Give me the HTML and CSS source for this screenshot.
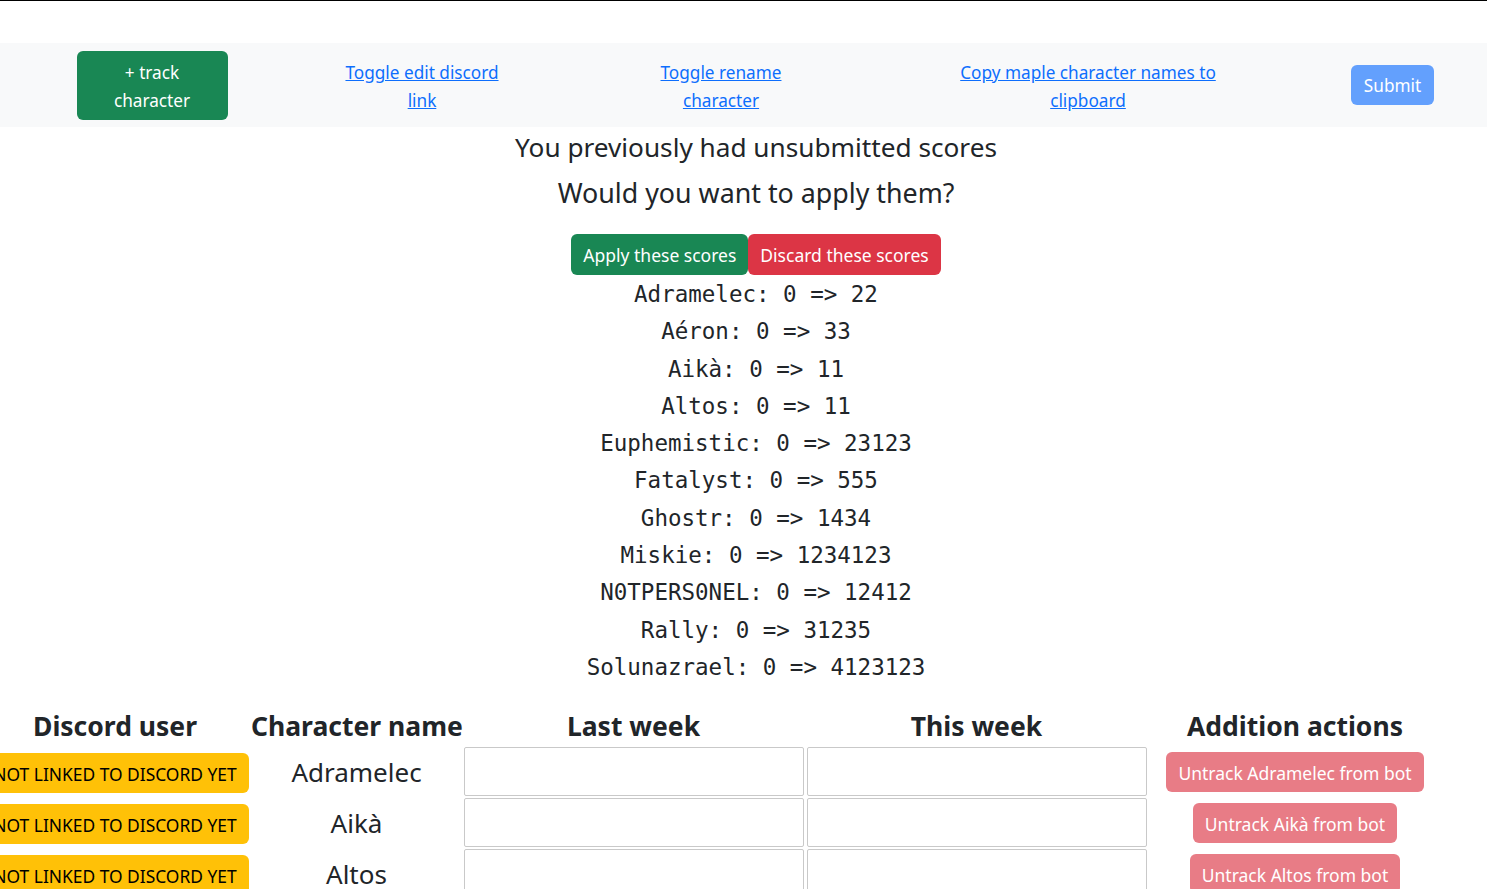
FILE: index.html
```html
<!DOCTYPE html>
<html lang="en">
<head>
<meta charset="utf-8">
<title>Scores</title>
<link rel="stylesheet" href="styles.css">
</head>
<body>
<div class="topline"></div>
<nav class="navbar">
  <div class="nav-cell c1"><button class="btn btn-success btn-track">+ track<br>character</button></div>
  <div class="nav-cell c2"><a href="#" class="nav-link">Toggle edit discord<br>link</a></div>
  <div class="nav-cell c3"><a href="#" class="nav-link">Toggle rename<br>character</a></div>
  <div class="nav-cell c4"><a href="#" class="nav-link">Copy maple character names to<br>clipboard</a></div>
  <div class="nav-cell c5"><button class="btn btn-primary-disabled">Submit</button></div>
</nav>
<main class="main">
  <section class="restore">
    <h3 class="restore-title">You previously had unsubmitted scores</h3>
    <h3 class="restore-title second">Would you want to apply them?</h3>
    <div class="btn-group">
      <button class="btn btn-success">Apply these scores</button>
      <button class="btn btn-danger">Discard these scores</button>
    </div>
    <div class="diff-list">
      <div class="diff">Adramelec: 0 =&gt; 22</div>
      <div class="diff">Aéron: 0 =&gt; 33</div>
      <div class="diff">Aikà: 0 =&gt; 11</div>
      <div class="diff">Altos: 0 =&gt; 11</div>
      <div class="diff">Euphemistic: 0 =&gt; 23123</div>
      <div class="diff">Fatalyst: 0 =&gt; 555</div>
      <div class="diff">Ghostr: 0 =&gt; 1434</div>
      <div class="diff">Miskie: 0 =&gt; 1234123</div>
      <div class="diff">N0TPERS0NEL: 0 =&gt; 12412</div>
      <div class="diff">Rally: 0 =&gt; 31235</div>
      <div class="diff">Solunazrael: 0 =&gt; 4123123</div>
    </div>
  </section>
  <div class="table-wrap">
    <table class="score-table">
      <colgroup>
        <col class="col-discord">
        <col class="col-name">
        <col class="col-week">
        <col class="col-week">
        <col class="col-actions">
      </colgroup>
      <thead>
        <tr>
          <th>Discord user</th>
          <th>Character name</th>
          <th>Last week</th>
          <th>This week</th>
          <th>Addition actions</th>
        </tr>
      </thead>
      <tbody>
        <tr>
          <td><span class="badge-warn">NOT LINKED TO DISCORD YET</span></td>
          <td class="char-name">Adramelec</td>
          <td><input class="score-input" type="text"></td>
          <td><input class="score-input" type="text"></td>
          <td><button class="btn btn-danger-disabled">Untrack Adramelec from bot</button></td>
        </tr>
        <tr>
          <td><span class="badge-warn">NOT LINKED TO DISCORD YET</span></td>
          <td class="char-name">Aikà</td>
          <td><input class="score-input" type="text"></td>
          <td><input class="score-input" type="text"></td>
          <td><button class="btn btn-danger-disabled">Untrack Aikà from bot</button></td>
        </tr>
        <tr>
          <td><span class="badge-warn">NOT LINKED TO DISCORD YET</span></td>
          <td class="char-name">Altos</td>
          <td><input class="score-input" type="text"></td>
          <td><input class="score-input" type="text"></td>
          <td><button class="btn btn-danger-disabled">Untrack Altos from bot</button></td>
        </tr>
      </tbody>
    </table>
  </div>
</main>
</body>
</html>
```

FILE: styles.css
```css
* { box-sizing: border-box; }
html, body {
  margin: 0;
  padding: 0;
  overflow: hidden;
}
body {
  font-family: "Noto Sans", "Open Sans", sans-serif;
  color: #212529;
  background: #fff;
}
.topline {
  height: 1px;
  background: #000;
}
.navbar {
  margin-top: 42px;
  height: 84px;
  background: #f8f9fa;
  display: grid;
  grid-template-columns: 304px 236px 362px 372px 1fr;
  align-items: center;
}
.nav-cell {
  display: flex;
  justify-content: center;
  text-align: center;
}
.nav-cell.c2,
.nav-cell.c3,
.nav-cell.c4 {
  padding-top: 4px;
}
.nav-cell.c5 {
  justify-content: flex-start;
  padding-left: 77px;
}
.nav-link {
  color: #0d6efd;
  font-size: 17.2px;
  line-height: 28px;
  text-decoration: underline;
}
.btn {
  font-family: inherit;
  font-size: 17.5px;
  border: 0;
  border-radius: 6px;
  color: #fff;
  height: 40px;
  padding: 0 12px;
  cursor: pointer;
  white-space: nowrap;
}
.btn-success { background: #198754; }
.btn-danger { background: #dc3545; }
.btn-track {
  width: 151px;
  height: 69px;
  line-height: 28px;
  padding-top: 4px;
  font-size: 17.2px;
}
.btn-primary-disabled {
  background: #63a0fd;
  width: 83px;
  font-size: 17.2px;
}
.btn-danger-disabled {
  background: #e87c86;
  padding-top: 3px;
}
.main {
  display: flex;
  flex-direction: column;
}
.restore {
  display: flex;
  flex-direction: column;
  align-items: center;
  padding-left: 25px;
}
.restore-title {
  margin: 0;
  font-size: 26.2px;
  font-weight: 400;
  line-height: 40px;
}
.restore-title.second {
  margin-top: 6px;
  font-size: 26.8px;
}
.btn-group {
  display: flex;
  margin-top: 21px;
}
.btn-group .btn {
  height: 41px;
}
.diff-list {
  display: flex;
  flex-direction: column;
  align-items: center;
  padding-top: 1px;
}
.diff {
  font-family: "DejaVu Sans Mono", monospace;
  font-size: 22.5px;
  line-height: 37.3px;
  white-space: pre;
}
.table-wrap {
  margin-top: 19px;
  margin-left: -21px;
}
.score-table {
  table-layout: fixed;
  width: 1463px;
  border-collapse: separate;
  border-spacing: 0;
}
.col-discord { width: 272px; }
.col-name { width: 211px; }
.col-week { width: 343px; }
.col-actions { width: 294px; }
.score-table th {
  font-size: 26.5px;
  font-weight: 700;
  height: 41px;
  padding: 0;
  text-align: center;
  vertical-align: middle;
  white-space: nowrap;
}
.score-table td {
  padding: 1px 1.5px;
  height: 50.5px;
  text-align: center;
  vertical-align: middle;
}
.badge-warn {
  display: inline-block;
  background: #ffc107;
  color: #000;
  font-size: 17.4px;
  line-height: 37px;
  height: 40px;
  padding: 3px 12px 0;
  margin-top: 2px;
  border-radius: 6px;
  white-space: nowrap;
}
.char-name {
  font-size: 26px;
}
.score-input {
  display: block;
  width: 100%;
  height: 49px;
  border: 1px solid #c9c9c9;
  border-radius: 2px;
  background: #fff;
  font-size: 17px;
}
```
